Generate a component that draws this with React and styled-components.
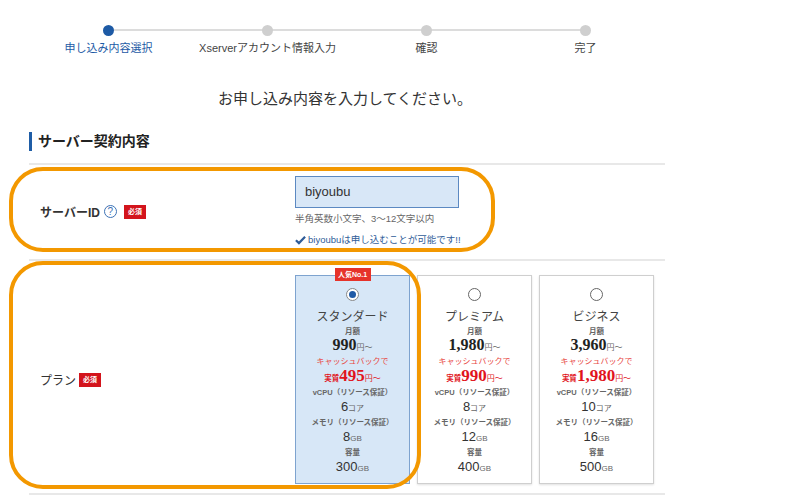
import React from "react";
import styled, { createGlobalStyle } from "styled-components";

const Global = createGlobalStyle`
  html, body { margin: 0; padding: 0; background: #fff; }
  body { font-family: "Liberation Sans", "Noto Sans CJK JP", sans-serif; color: #333; }
  * { box-sizing: border-box; }
`;

const Page = styled.div`
  position: relative;
  width: 800px;
  height: 500px;
  overflow: hidden;
`;

const Container = styled.div`
  margin-left: 29px;
  width: 636px;
`;

const StepList = styled.div`
  position: relative;
  display: grid;
  grid-template-columns: repeat(4, 1fr);
  padding-top: 25px;
  &::before {
    content: "";
    position: absolute;
    left: 12.5%;
    right: 12.5%;
    top: 29px;
    height: 2px;
    background: #dcdcdc;
  }
`;

const Step = styled.div`
  position: relative;
  display: flex;
  flex-direction: column;
  align-items: center;
`;

const Dot = styled.div`
  width: 11px;
  height: 11px;
  border-radius: 50%;
  background: ${(p) => (p.$active ? "#1d5aa5" : "#cfcfcf")};
`;

const StepLabel = styled.div`
  margin-top: 5px;
  height: 14px;
  font-size: 11px;
  line-height: 14px;
  color: ${(p) => (p.$active ? "#1d5aa5" : "#444")};
  white-space: nowrap;
`;

const Heading = styled.h1`
  margin: 34px 0 0;
  height: 20px;
  font-size: 15px;
  line-height: 20px;
  font-weight: normal;
  text-align: center;
  color: #333;
  padding-right: 4px;
`;

const SectionTitle = styled.h2`
  margin: 23px 0 0;
  height: 19px;
  border-left: 3px solid #1f5da6;
  padding-left: 6px;
  font-size: 14px;
  line-height: 19px;
  font-weight: bold;
  color: #222;
`;

const Form = styled.div`
  margin-top: 12px;
  border-top: 2px solid #e8e8e8;
`;

const Row = styled.div`
  display: flex;
  border-bottom: 2px solid #e8e8e8;
  padding: ${(p) => p.$pad};
`;

const LabelCell = styled.div`
  width: 266px;
  padding-left: 11px;
  display: flex;
  align-items: center;
  font-size: 12px;
  font-weight: ${(p) => (p.$bold ? "bold" : "normal")};
  color: #333;
`;

const Help = styled.span`
  display: inline-flex;
  align-items: center;
  justify-content: center;
  width: 13px;
  height: 13px;
  margin-left: 4px;
  border: 1px solid #3d72b5;
  border-radius: 50%;
  color: #3d72b5;
  font-size: 10px;
  font-weight: normal;
  line-height: 1;
`;

const Required = styled.span`
  display: inline-block;
  width: 22px;
  height: 14px;
  margin-left: ${(p) => p.$ml || 4}px;
  background: #d3141c;
  color: #fff;
  font-size: 7px;
  font-weight: bold;
  line-height: 14px;
  text-align: center;
`;

const ValueCell = styled.div`
  flex: 1;
`;

const Input = styled.div`
  width: 164px;
  height: 32px;
  border: 1px solid #5c89c2;
  background: #d8e7f7;
  padding-left: 9px;
  font-size: 13px;
  line-height: 30px;
  color: #333;
`;

const Hint = styled.div`
  margin-top: 4px;
  height: 14px;
  font-size: 9.5px;
  line-height: 14px;
  color: #666;
`;

const Ok = styled.div`
  margin-top: 7px;
  height: 14px;
  display: flex;
  align-items: center;
  gap: 2px;
  font-size: 9.5px;
  line-height: 14px;
  color: #2f5c98;
`;

const Cards = styled.div`
  display: flex;
  gap: 7px;
`;

const Card = styled.div`
  position: relative;
  width: 115px;
  height: 209px;
  padding-top: 12px;
  border: 1px solid ${(p) => (p.$selected ? "#7ea3cf" : "#cfcfcf")};
  background: ${(p) => (p.$selected ? "#d7e7f7" : "#fff")};
  box-shadow: ${(p) => (p.$selected ? "none" : "0 1px 2px rgba(0,0,0,0.12)")};
  text-align: center;
  color: #444;
`;

const Popular = styled.div`
  position: absolute;
  top: -8px;
  left: 50%;
  transform: translateX(-50%);
  width: 36px;
  height: 13px;
  background: #e6332a;
  color: #fff;
  font-size: 7px;
  font-weight: bold;
  line-height: 13px;
  white-space: nowrap;
`;

const Radio = styled.div`
  margin: 0 auto;
  width: 13px;
  height: 13px;
  border-radius: 50%;
  border: 1px solid ${(p) => (p.$on ? "#888" : "#666")};
  background: #fff;
  display: flex;
  align-items: center;
  justify-content: center;
  &::after {
    content: "";
    width: 7px;
    height: 7px;
    border-radius: 50%;
    background: ${(p) => (p.$on ? "#1f5aa6" : "transparent")};
  }
`;

const PlanName = styled.div`
  margin-top: 7px;
  height: 18px;
  font-size: 12px;
  line-height: 18px;
  color: #444;
`;

const Tiny = styled.div`
  margin-top: ${(p) => p.$mt || 0}px;
  height: ${(p) => p.$lh || 12}px;
  font-size: 7.5px;
  font-weight: bold;
  line-height: ${(p) => p.$lh || 12}px;
  color: #666;
  white-space: nowrap;
`;

const Price = styled.div`
  height: 16px;
  line-height: 16px;
  color: ${(p) => (p.$red ? "#e1141d" : "#222")};
  white-space: nowrap;
`;

const Num = styled.span`
  font-family: "Liberation Serif", serif;
  font-weight: bold;
  font-size: ${(p) => p.$size || 16}px;
`;

const Unit = styled.span`
  font-size: 8px;
  color: ${(p) => (p.$red ? "#e1141d" : "#666")};
`;

const Cashback = styled.div`
  margin-top: 3px;
  height: 12px;
  font-size: 8px;
  line-height: 12px;
  color: #e8473f;
  white-space: nowrap;
`;

const Jisshitsu = styled.span`
  font-size: 7.5px;
  font-weight: bold;
  color: #e1141d;
`;

const SpecValue = styled.div`
  height: 15px;
  font-size: 13px;
  line-height: 15px;
  color: #333;
`;

const Highlight = styled.div`
  position: absolute;
  left: ${(p) => p.$x}px;
  top: ${(p) => p.$y}px;
  width: ${(p) => p.$w}px;
  height: ${(p) => p.$h}px;
  border: 4px solid #f39800;
  border-radius: 34px;
  pointer-events: none;
`;

const steps = ["申し込み内容選択", "Xserverアカウント情報入力", "確認", "完了"];

const plans = [
  { name: "スタンダード", price: "990", real: "495", cpu: "6", mem: "8", disk: "300", selected: true },
  { name: "プレミアム", price: "1,980", real: "990", cpu: "8", mem: "12", disk: "400" },
  { name: "ビジネス", price: "3,960", real: "1,980", cpu: "10", mem: "16", disk: "500" },
];

const Check = () => (
  <svg width="11" height="10" viewBox="0 0 12 10">
    <path d="M1 5.2 L4.3 8.4 L11 1.4" fill="none" stroke="#2f5c98" strokeWidth="2.4" />
  </svg>
);

export default function App() {
  return (
    <Page>
      <Global />
      <Container>
        <StepList>
          {steps.map((s, i) => (
            <Step key={s}>
              <Dot $active={i === 0} />
              <StepLabel $active={i === 0}>{s}</StepLabel>
            </Step>
          ))}
        </StepList>
        <Heading>お申し込み内容を入力してください。</Heading>
        <SectionTitle>サーバー契約内容</SectionTitle>
        <Form>
          <Row $pad="11px 0 12px">
            <LabelCell $bold>
              サーバーID
              <Help>?</Help>
              <Required $ml={7}>必須</Required>
            </LabelCell>
            <ValueCell>
              <Input>biyoubu</Input>
              <Hint>半角英数小文字、3〜12文字以内</Hint>
              <Ok>
                <Check />
                biyoubuは申し込むことが可能です!!
              </Ok>
            </ValueCell>
          </Row>
          <Row $pad="14px 0 9px">
            <LabelCell>
              プラン
              <Required $ml={3}>必須</Required>
            </LabelCell>
            <ValueCell>
              <Cards>
                {plans.map((p) => (
                  <Card key={p.name} $selected={p.selected}>
                    {p.selected && <Popular>人気No.1</Popular>}
                    <Radio $on={p.selected} />
                    <PlanName>{p.name}</PlanName>
                    <Tiny $mt={1} $lh={10}>月額</Tiny>
                    <Price>
                      <Num>{p.price}</Num>
                      <Unit>円〜</Unit>
                    </Price>
                    <Cashback>キャッシュバックで</Cashback>
                    <Price $red>
                      <Jisshitsu>実質</Jisshitsu>
                      <Num $size={17}>{p.real}</Num>
                      <Unit $red>円〜</Unit>
                    </Price>
                    <Tiny $mt={3}>vCPU（リソース保証）</Tiny>
                    <SpecValue>
                      {p.cpu}
                      <Unit>コア</Unit>
                    </SpecValue>
                    <Tiny $mt={3}>メモリ（リソース保証）</Tiny>
                    <SpecValue>
                      {p.mem}
                      <Unit>GB</Unit>
                    </SpecValue>
                    <Tiny $mt={3}>容量</Tiny>
                    <SpecValue>
                      {p.disk}
                      <Unit>GB</Unit>
                    </SpecValue>
                  </Card>
                ))}
              </Cards>
            </ValueCell>
          </Row>
        </Form>
      </Container>
      <Highlight $x={9} $y={167} $w={486} $h={85} />
      <Highlight $x={9} $y={261} $w={412} $h={228} />
    </Page>
  );
}
